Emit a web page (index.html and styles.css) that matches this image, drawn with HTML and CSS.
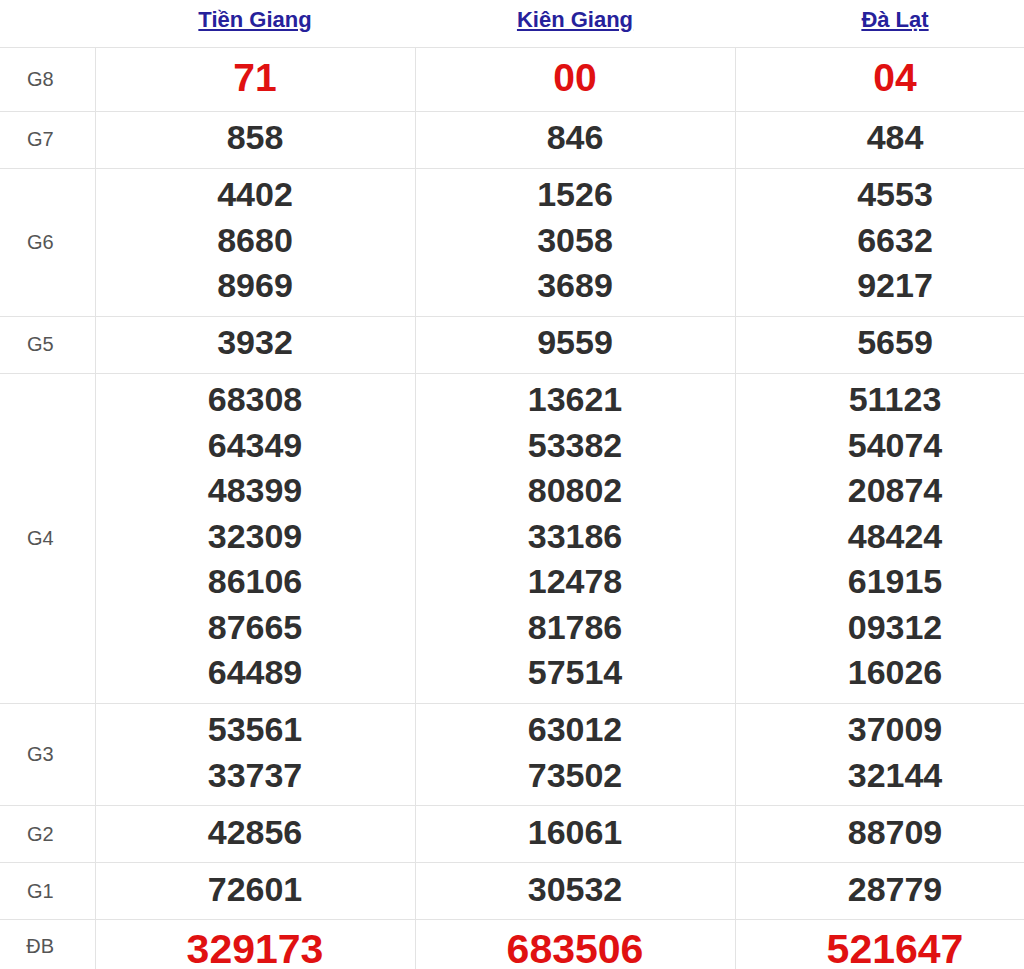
FILE: index.html
```html
<!DOCTYPE html>
<html lang="vi">
<head>
<meta charset="utf-8">
<title>Kết quả xổ số</title>
<link rel="stylesheet" href="styles.css">
</head>
<body>
<div class="wrap">
<table class="kq">
  <colgroup><col class="c-label"><col class="c-prov"><col class="c-prov"><col class="c-prov"></colgroup>
  <thead>
    <tr>
      <th class="h-empty"></th>
      <th><a href="#">Tiền Giang</a></th>
      <th><a href="#">Kiên Giang</a></th>
      <th><a href="#">Đà Lạt</a></th>
    </tr>
  </thead>
  <tbody>
    <tr class="r-g8">
      <td class="lbl">G8</td>
      <td class="num red g8"><div>71</div></td>
      <td class="num red g8"><div>00</div></td>
      <td class="num red g8"><div>04</div></td>
    </tr>
    <tr>
      <td class="lbl">G7</td>
      <td class="num"><div>858</div></td>
      <td class="num"><div>846</div></td>
      <td class="num"><div>484</div></td>
    </tr>
    <tr>
      <td class="lbl">G6</td>
      <td class="num"><div>4402</div><div>8680</div><div>8969</div></td>
      <td class="num"><div>1526</div><div>3058</div><div>3689</div></td>
      <td class="num"><div>4553</div><div>6632</div><div>9217</div></td>
    </tr>
    <tr>
      <td class="lbl">G5</td>
      <td class="num"><div>3932</div></td>
      <td class="num"><div>9559</div></td>
      <td class="num"><div>5659</div></td>
    </tr>
    <tr>
      <td class="lbl">G4</td>
      <td class="num"><div>68308</div><div>64349</div><div>48399</div><div>32309</div><div>86106</div><div>87665</div><div>64489</div></td>
      <td class="num"><div>13621</div><div>53382</div><div>80802</div><div>33186</div><div>12478</div><div>81786</div><div>57514</div></td>
      <td class="num"><div>51123</div><div>54074</div><div>20874</div><div>48424</div><div>61915</div><div>09312</div><div>16026</div></td>
    </tr>
    <tr>
      <td class="lbl">G3</td>
      <td class="num"><div>53561</div><div>33737</div></td>
      <td class="num"><div>63012</div><div>73502</div></td>
      <td class="num"><div>37009</div><div>32144</div></td>
    </tr>
    <tr>
      <td class="lbl">G2</td>
      <td class="num"><div>42856</div></td>
      <td class="num"><div>16061</div></td>
      <td class="num"><div>88709</div></td>
    </tr>
    <tr>
      <td class="lbl">G1</td>
      <td class="num"><div>72601</div></td>
      <td class="num"><div>30532</div></td>
      <td class="num"><div>28779</div></td>
    </tr>
    <tr class="r-db">
      <td class="lbl">ĐB</td>
      <td class="num red db"><div>329173</div></td>
      <td class="num red db"><div>683506</div></td>
      <td class="num red db"><div>521647</div></td>
    </tr>
  </tbody>
</table>
</div>
</body>
</html>
```

FILE: styles.css
```css
html, body {
  margin: 0;
  padding: 0;
  background: #ffffff;
}

body {
  font-family: "Liberation Sans", Arial, sans-serif;
  color: #303030;
}

.wrap {
  width: 1024px;
  height: 969px;
  overflow: hidden;
}

.kq {
  border-collapse: collapse;
  table-layout: fixed;
  width: 1055px;
}

.c-label { width: 95px; }
.c-prov { width: 320px; }

.kq thead th {
  height: 40px;
  padding: 0 0 7px 0;
  border-bottom: 1px solid #e3e3e3;
  text-align: center;
  vertical-align: middle;
  font-size: 22px;
  font-weight: bold;
}

.kq thead th a {
  color: #26219b;
  text-decoration: underline;
}

.kq td {
  border: 1px solid #e3e3e3;
  text-align: center;
  vertical-align: middle;
}

.kq td.lbl {
  border-left: none;
  font-size: 20px;
  color: #555555;
  padding: 0 14px 0 0;
}

.kq td.num {
  padding: 3.5px 0 7px 0;
  font-size: 34px;
  font-weight: bold;
  line-height: 45.5px;
}

.kq td.num.g8 {
  font-size: 39px;
  padding: 7px 0 10px 0;
}

.kq td.num.db {
  font-size: 41px;
  line-height: 42px;
  padding: 8px 0 2px 0;
  vertical-align: top;
}

.red { color: #e01111; }

.r-db td { border-bottom: none; }
```
